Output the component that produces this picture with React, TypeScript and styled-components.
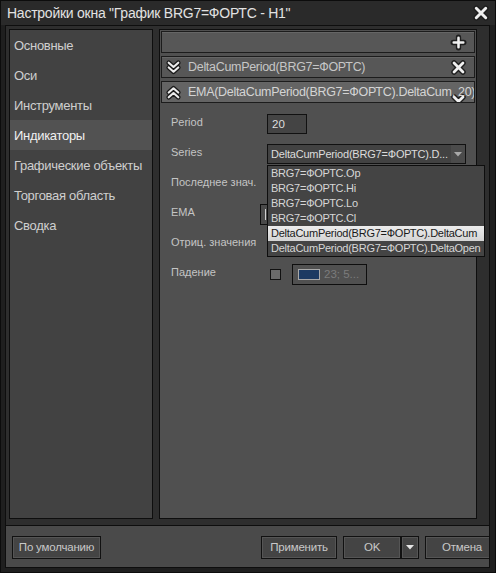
import React from 'react';
import styled, { createGlobalStyle } from 'styled-components';

const GlobalStyle = createGlobalStyle`
  html, body {
    margin: 0;
    padding: 0;
    background: #111;
  }
  * {
    box-sizing: border-box;
  }
`;

const font = `"Liberation Sans", Arial, "DejaVu Sans", sans-serif`;

const Window = styled.div`
  width: 496px;
  height: 573px;
  background: #1f1f1f;
  border: 1px solid #0c0c0c;
  display: flex;
  flex-direction: column;
  font-family: ${font};
  overflow: hidden;
`;

const TitleBar = styled.div`
  height: 24px;
  flex: none;
  display: flex;
  align-items: center;
  justify-content: space-between;
  padding: 0 5px 1px 6px;
  background: #2a2a2a;
  color: #e2e2e2;
  font-size: 14px;
  letter-spacing: -0.25px;
`;

const Frame = styled.div`
  flex: 1;
  display: flex;
  flex-direction: column;
  margin: 0 5px 4px 4px;
  border: 1px solid #0e0e0e;
  background: #2e2e2e;
  min-width: 0;
`;

const Panels = styled.div`
  flex: 1;
  display: flex;
  gap: 6px;
  padding: 3px 12px 0 3px;
  min-width: 0;
`;

const Sidebar = styled.ul`
  list-style: none;
  margin: 0;
  padding: 0;
  width: 144px;
  flex: none;
  background: #424242;
  border: 1px solid #0e0e0e;
`;

const SideItem = styled.li<{ $active?: boolean }>`
  height: 30px;
  display: flex;
  align-items: center;
  padding-left: 4px;
  font-size: 13px;
  letter-spacing: -0.3px;
  color: ${(p) => (p.$active ? '#f0f0f0' : '#cfcfcf')};
  background: ${(p) => (p.$active ? '#525252' : 'transparent')};
  white-space: nowrap;
`;

const Content = styled.div`
  flex: 1;
  min-width: 0;
  display: flex;
  flex-direction: column;
  gap: 3px;
  padding: 1px 1px;
  background: #505050;
  border: 1px solid #0e0e0e;
`;

const Bar = styled.div<{ $selected?: boolean }>`
  position: relative;
  height: 22px;
  display: flex;
  align-items: center;
  gap: 6px;
  padding: 0 8px 0 3px;
  background: ${(p) => (p.$selected ? '#646464' : '#575757')};
  border: 1px solid #1c1c1c;
  box-shadow: inset 0 1px 0 #666;
  overflow: hidden;
`;

const BarText = styled.span<{ $selected?: boolean }>`
  flex: 1;
  font-size: 12.5px;
  letter-spacing: -0.3px;
  color: ${(p) => (p.$selected ? '#d4d4d4' : '#c6c6c6')};
  white-space: nowrap;
  position: relative;
  z-index: 1;
`;

const BarIcon = styled.svg`
  flex: none;
  width: 17px;
  height: 17px;
`;

const RightIcon = styled.div<{ $low?: boolean }>`
  position: absolute;
  right: 7px;
  top: ${(p) => (p.$low ? '11px' : '2px')};
  display: flex;
`;

const Form = styled.div`
  display: grid;
  grid-template-columns: 96px 1fr;
  grid-auto-rows: 30px;
  padding: 2px 0 0 10px;
  font-size: 11px;
  color: #c4c4c4;
`;

const Label = styled.div`
  display: flex;
  align-items: center;
  padding-bottom: 2px;
  white-space: nowrap;
`;

const Cell = styled.div`
  display: flex;
  align-items: center;
  gap: 11px;
  padding-top: 2px;
`;

const Input = styled.div<{ $w: number }>`
  width: ${(p) => p.$w}px;
  height: 20px;
  display: flex;
  align-items: center;
  padding-left: 4px;
  background: #444;
  border: 1px solid #111;
  color: #dedede;
  font-size: 11.5px;
`;

const SelectWrap = styled.div`
  position: relative;
`;

const Select = styled.div`
  width: 199px;
  height: 20px;
  display: flex;
  align-items: stretch;
  background: #424242;
  border: 1px solid #111;
  color: #dcdcdc;
  font-size: 11px;
  letter-spacing: -0.2px;
`;

const SelectValue = styled.div`
  flex: 1;
  display: flex;
  align-items: center;
  padding-left: 3px;
  white-space: nowrap;
  overflow: hidden;
`;

const SelectArrow = styled.div`
  width: 14px;
  display: flex;
  align-items: center;
  justify-content: center;
  background: #4b4b4b;
`;

const Menu = styled.ul`
  position: absolute;
  top: calc(100% + 1px);
  left: 0;
  z-index: 5;
  width: 218px;
  margin: 0;
  padding: 0;
  list-style: none;
  background: #444;
  border: 1px solid #0e0e0e;
`;

const MenuItem = styled.li<{ $active?: boolean }>`
  height: 15px;
  line-height: 15px;
  padding-left: 3px;
  font-size: 11px;
  letter-spacing: -0.25px;
  white-space: nowrap;
  color: ${(p) => (p.$active ? '#1a1a1a' : '#d6d6d6')};
  background: ${(p) => (p.$active ? 'linear-gradient(#ececec, #d4d4d4)' : 'transparent')};
`;

const Spinner = styled.div`
  width: 60px;
  height: 21px;
  margin-left: -7px;
  border: 1px solid #0e0e0e;
  background: #4a4a4a;
  display: flex;
  align-items: center;
  padding-left: 4px;
  &::before {
    content: '';
    width: 1px;
    height: 11px;
    background: #cfcfcf;
  }
`;

const Check = styled.div`
  margin-left: 3px;
  width: 11px;
  height: 11px;
  background: #6a6a6a;
  border: 1px solid #111;
`;

const ColorBox = styled.div`
  width: 75px;
  height: 21px;
  display: flex;
  align-items: center;
  gap: 4px;
  padding-left: 5px;
  border: 1px solid #0e0e0e;
  background: #505050;
  color: #7c7c7c;
  font-size: 11.5px;
`;

const Swatch = styled.div`
  width: 22px;
  height: 11px;
  background: #1c3a62;
  border: 1px solid #a8a8a8;
`;

const BottomBar = styled.div`
  height: 42px;
  margin-top: 6px;
  flex: none;
  display: flex;
  align-items: center;
  padding: 1px 0 0 6px;
  border-top: 1px solid #0e0e0e;
  background: #4a4a4a;
  overflow: hidden;
`;

const Button = styled.button<{ $w: number }>`
  width: ${(p) => p.$w}px;
  height: 23px;
  flex: none;
  padding: 0;
  margin: 0;
  background: #444;
  border: 1px solid #111;
  box-shadow: inset 0 0 0 1px #555;
  color: #c8c8c8;
  font-family: ${font};
  font-size: 11.5px;
  letter-spacing: -0.2px;
  white-space: nowrap;
  display: flex;
  align-items: center;
  justify-content: center;
`;

const Spacer = styled.div`
  flex: 1;
`;

const Group = styled.div`
  display: flex;
  gap: 6px;
  margin-right: -10px;
`;

const SplitButton = styled.div`
  display: flex;
`;

const PlusIcon = () => (
  <BarIcon viewBox="0 0 16 16">
    <path d="M8 3v10M3 8h10" stroke="#1e1e1e" strokeWidth="5" strokeLinecap="round" fill="none" />
    <path d="M8 3.5v9M3.5 8h9" stroke="#f0f0f0" strokeWidth="2.4" strokeLinecap="round" fill="none" />
  </BarIcon>
);

const CrossIcon = ({ size = 17 }: { size?: number }) => (
  <svg width={size} height={size} viewBox="0 0 16 16">
    <path d="M3.8 3.8l8.4 8.4M12.2 3.8l-8.4 8.4" stroke="#1e1e1e" strokeWidth="5.2" strokeLinecap="round" fill="none" />
    <path d="M3.8 3.8l8.4 8.4M12.2 3.8l-8.4 8.4" stroke="#f0f0f0" strokeWidth="2.6" strokeLinecap="round" fill="none" />
  </svg>
);

const ChevronsIcon = ({ up }: { up?: boolean }) => {
  const d = up
    ? 'M3.5 8l4.5-4 4.5 4M3.5 12.5l4.5-4 4.5 4'
    : 'M3.5 3.5l4.5 4 4.5-4M3.5 8l4.5 4 4.5-4';
  return (
    <BarIcon viewBox="0 0 16 16">
      <path d={d} stroke="#1a1a1a" strokeWidth="4.4" strokeLinecap="round" strokeLinejoin="round" fill="none" />
      <path d={d} stroke="#ececec" strokeWidth="2" strokeLinecap="round" strokeLinejoin="round" fill="none" />
    </BarIcon>
  );
};

const Caret = ({ color = '#a8a8a8' }: { color?: string }) => (
  <svg width="8" height="5" viewBox="0 0 8 5">
    <path d="M0 0h8L4 4.5z" fill={color} />
  </svg>
);

const sections = [
  'Основные',
  'Оси',
  'Инструменты',
  'Индикаторы',
  'Графические объекты',
  'Торговая область',
  'Сводка',
];

const series = [
  'BRG7=ФОРТС.Op',
  'BRG7=ФОРТС.Hi',
  'BRG7=ФОРТС.Lo',
  'BRG7=ФОРТС.Cl',
  'DeltaCumPeriod(BRG7=ФОРТС).DeltaCum',
  'DeltaCumPeriod(BRG7=ФОРТС).DeltaOpen',
];

const App = () => {
  return (
    <>
      <GlobalStyle />
      <Window>
        <TitleBar>
          <span>Настройки окна "График BRG7=ФОРТС - H1"</span>
          <CrossIcon size={18} />
        </TitleBar>
        <Frame>
          <Panels>
            <Sidebar>
              {sections.map((s) => (
                <SideItem key={s} $active={s === 'Индикаторы'}>
                  {s}
                </SideItem>
              ))}
            </Sidebar>
            <Content>
              <Bar>
                <Spacer />
                <RightIcon>
                  <PlusIcon />
                </RightIcon>
              </Bar>
              <Bar>
                <ChevronsIcon />
                <BarText>DeltaCumPeriod(BRG7=ФОРТС)</BarText>
                <RightIcon>
                  <CrossIcon />
                </RightIcon>
              </Bar>
              <Bar $selected>
                <ChevronsIcon up />
                <BarText $selected>EMA(DeltaCumPeriod(BRG7=ФОРТС).DeltaCum, 20)</BarText>
                <RightIcon $low>
                  <CrossIcon />
                </RightIcon>
              </Bar>
              <Form>
                <Label>Period</Label>
                <Cell>
                  <Input $w={40}>20</Input>
                </Cell>
                <Label>Series</Label>
                <Cell>
                  <SelectWrap>
                    <Select>
                      <SelectValue>DeltaCumPeriod(BRG7=ФОРТС).D...</SelectValue>
                      <SelectArrow>
                        <Caret />
                      </SelectArrow>
                    </Select>
                    <Menu>
                      {series.map((s) => (
                        <MenuItem key={s} $active={s.endsWith('DeltaCum')}>
                          {s}
                        </MenuItem>
                      ))}
                    </Menu>
                  </SelectWrap>
                </Cell>
                <Label>Последнее знач.</Label>
                <Cell />
                <Label>EMA</Label>
                <Cell>
                  <Spinner />
                </Cell>
                <Label>Отриц. значения</Label>
                <Cell />
                <Label>Падение</Label>
                <Cell>
                  <Check />
                  <ColorBox>
                    <Swatch />
                    23; 5...
                  </ColorBox>
                </Cell>
              </Form>
            </Content>
          </Panels>
          <BottomBar>
            <Button $w={89}>По умолчанию</Button>
            <Spacer />
            <Group>
              <Button $w={76}>Применить</Button>
              <SplitButton>
                <Button $w={58}>OK</Button>
                <Button $w={18}>
                  <Caret color="#e6e6e6" />
                </Button>
              </SplitButton>
              <Button $w={74}>Отмена</Button>
            </Group>
          </BottomBar>
        </Frame>
      </Window>
    </>
  );
};

export default App;
